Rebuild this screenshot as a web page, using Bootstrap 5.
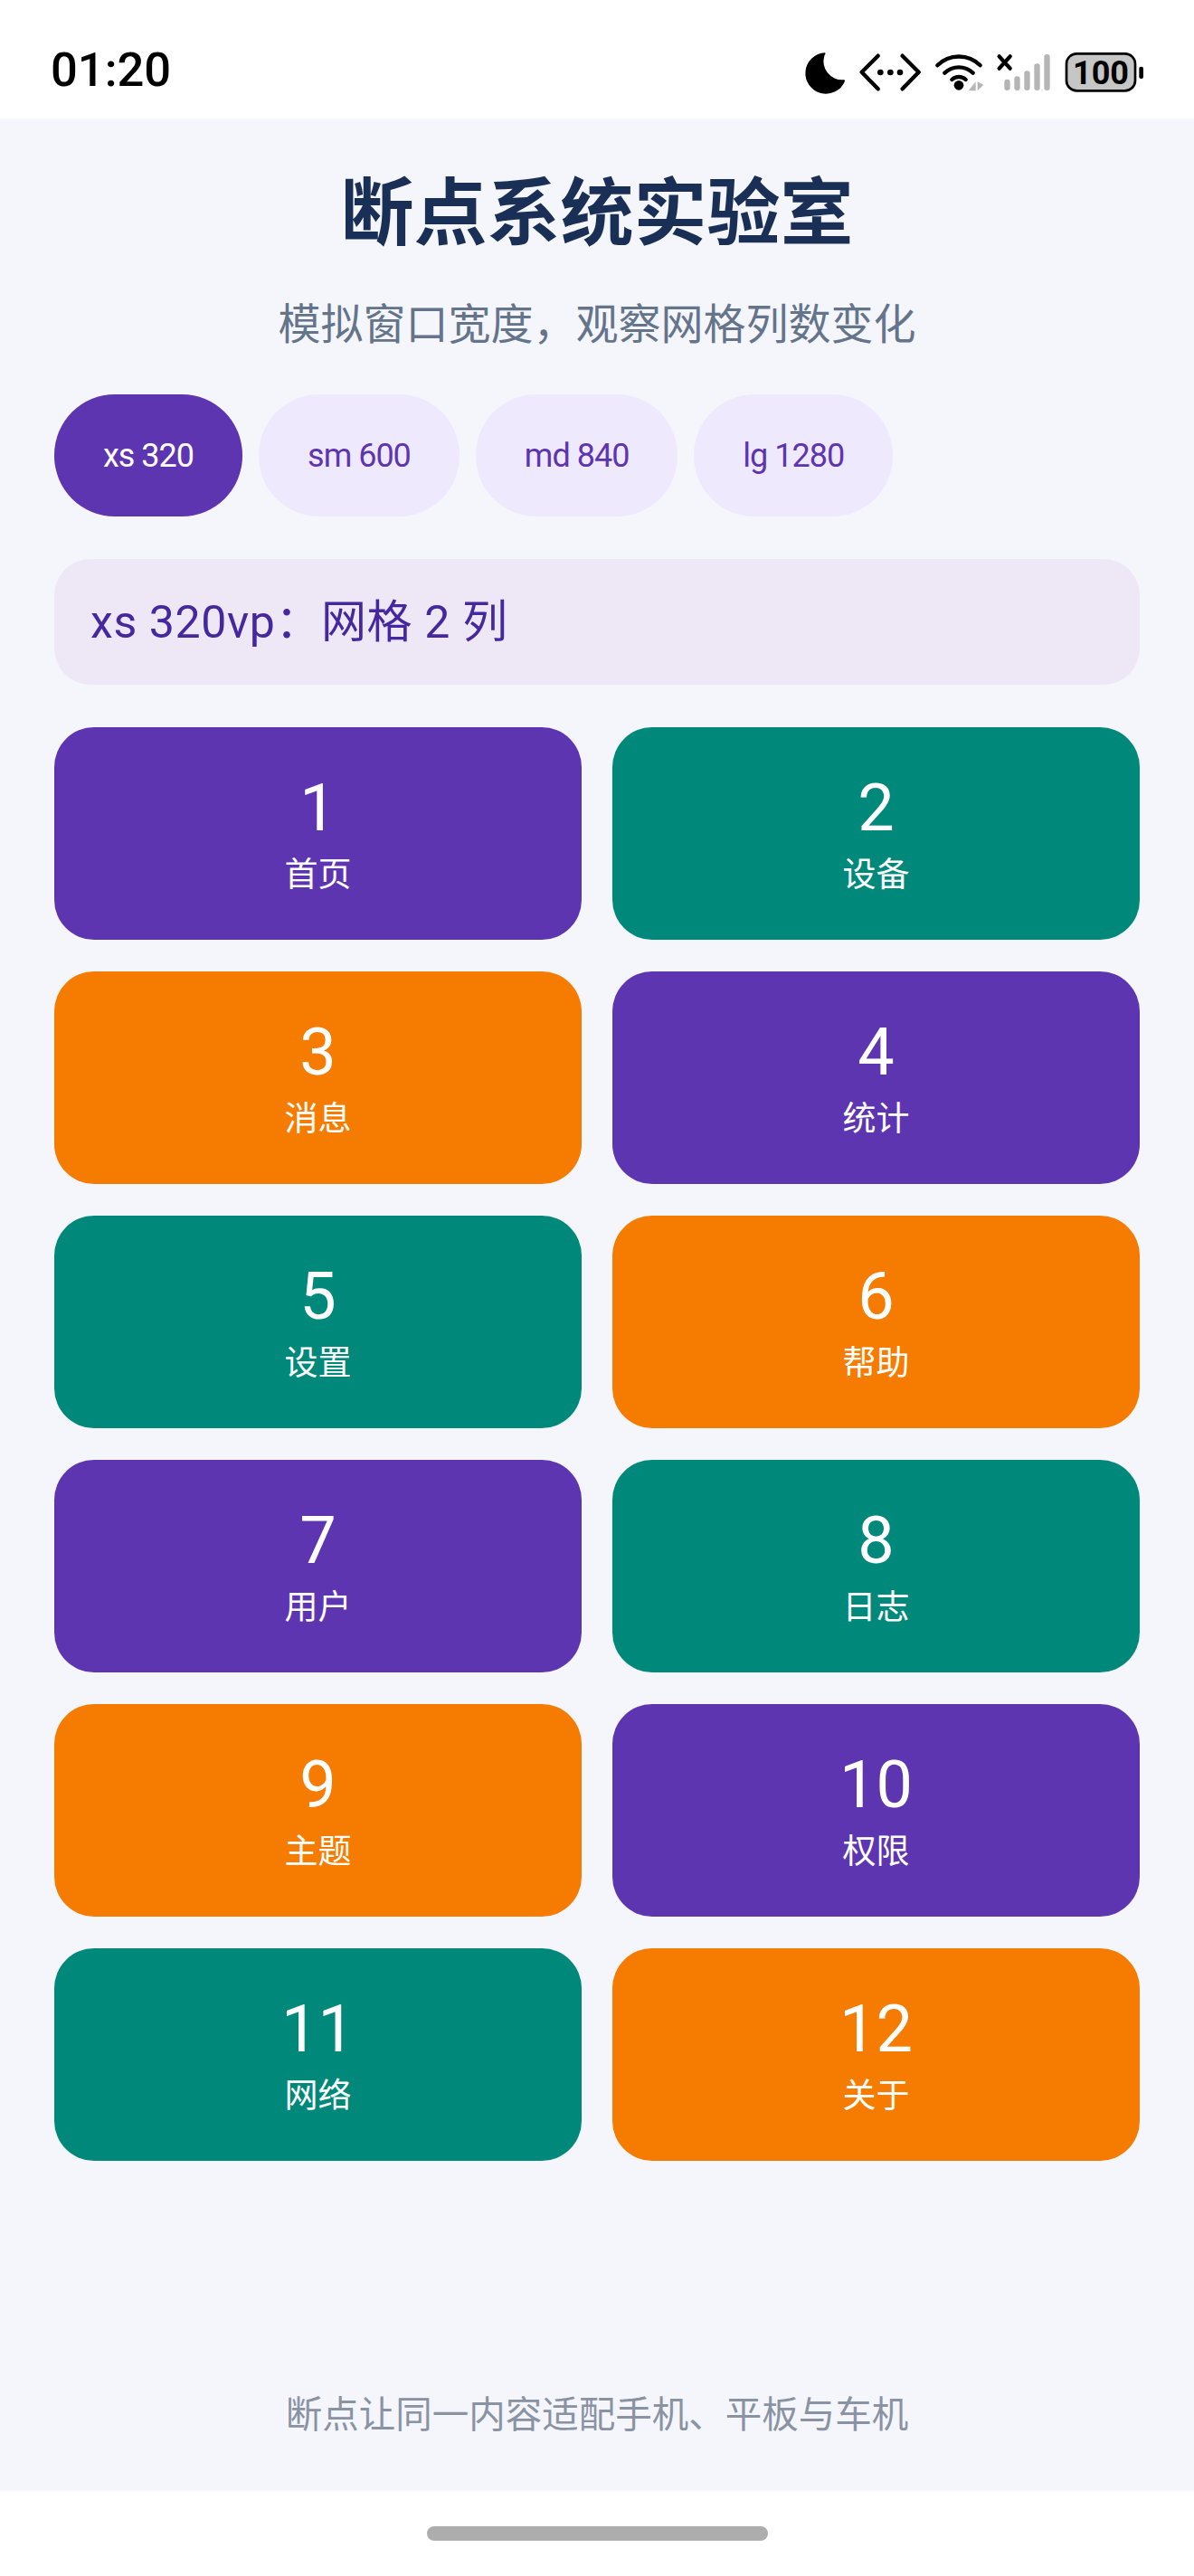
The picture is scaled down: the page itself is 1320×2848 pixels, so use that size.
<!DOCTYPE html>
<html lang="zh">
<head>
<meta charset="utf-8">
<title>断点系统实验室</title>
<link href="https://cdn.jsdelivr.net/npm/bootstrap@5.3.0/dist/css/bootstrap.min.css" rel="stylesheet">
<style>
html,body{height:100%}
body{width:1320px;height:2848px;margin:0;background:#fff;font-family:Roboto,"Noto Sans CJK SC",sans-serif;overflow:hidden}
.sbar{height:131px;padding:20px 40px 0 56px}
.clock{font-size:52.5px;color:#000;line-height:1;font-weight:500;margin-top:4px}
.sicons{width:420px;height:90px}
.batt{font-family:Roboto,sans-serif;font-weight:700;font-size:108px}
.lab{background:#f5f6fc;padding:0 60px}
.ttl{font-size:81px;font-weight:700;color:#1a2f55;line-height:106px;margin:53px 0 0}
.sub{font-size:47px;color:#64748b;line-height:64px;margin:37px 0 0}
.chips{gap:18px;margin-top:45px}
.chip{height:135px;padding:0 54px;border-radius:67px;background:#efe9fd;color:#5e35b1;font-size:36px;letter-spacing:-1px;border:0}
.chip.on{background:#5e35b1;color:#fff}
.state{height:139px;margin-top:47px;padding:2px 40px 0;border-radius:40px;background:#ede7f6;color:#4527a0;font-size:50px;letter-spacing:.6px}
.tiles{--bs-gutter-x:34px;--bs-gutter-y:35px;margin-top:12px}
.tile{height:235px;border-radius:44px;color:#fff}
.t-p{background:#5e35b1}.t-g{background:#00897b}.t-o{background:#f57c00}
.num{font-size:72px;line-height:84px}
.nm{font-size:37px;line-height:48px;margin-top:8px}
.foot{font-size:40.5px;color:#8a93a3;line-height:56px;padding-bottom:56px}
.hbar{height:94px}
.hpill{width:377px;height:16px;border-radius:8px;background:#adadad}
</style>
</head>
<body class="d-flex flex-column">
<header class="sbar d-flex align-items-center justify-content-between">
  <span class="clock">01:20</span>
  <svg class="sicons" viewBox="0 0 1260 270" aria-hidden="true">
    <path d="M156 82A68 68 0 1 0 222 176Q224 170 216 172A62 62 0 0 1 154 92Q160 84 156 82Z" fill="#000"/>
    <g fill="none" stroke="#000" stroke-width="13" stroke-linecap="round" stroke-linejoin="round">
      <path d="M332 92 278 146 332 202M413 92 467 146 413 202"/>
      <path d="M529 124A100 100 0 0 1 671 124M553 149A68 68 0 0 1 647 149M577 171A34 34 0 0 1 623 171"/>
      <path d="M734 94 770 134M770 94 734 134"/>
    </g>
    <circle cx="340" cy="147" r="10"/><circle cx="373" cy="147" r="10"/><circle cx="405" cy="147" r="10"/>
    <circle cx="600" cy="190" r="16"/>
    <path d="M656 178V208H632ZM662 178V208L682 188Z" fill="#b5b5b5"/>
    <g fill="#b5b5b5">
      <rect x="751" y="170" width="19" height="37" rx="9"/><rect x="784" y="160" width="19" height="47" rx="9"/><rect x="817" y="142" width="19" height="65" rx="9"/><rect x="850" y="118" width="19" height="89" rx="9"/><rect x="883" y="87" width="19" height="120" rx="9"/>
    </g>
    <rect x="957" y="85" width="228" height="123" rx="34" fill="#c6c6c6" stroke="#000" stroke-width="8"/>
    <text class="batt" x="1071" y="185" text-anchor="middle" fill="#000">100</text>
    <rect x="1198" y="128" width="14" height="40" rx="6"/>
  </svg>
</header>
<main class="lab flex-grow-1 d-flex flex-column">
  <h1 class="ttl text-center">断点系统实验室</h1>
  <p class="sub text-center mb-0">模拟窗口宽度，观察网格列数变化</p>
  <div class="chips d-flex">
    <button type="button" class="chip on d-flex align-items-center">xs 320</button>
    <button type="button" class="chip d-flex align-items-center">sm 600</button>
    <button type="button" class="chip d-flex align-items-center">md 840</button>
    <button type="button" class="chip d-flex align-items-center">lg 1280</button>
  </div>
  <div class="state d-flex align-items-center">xs 320vp：网格 2 列</div>
  <div class="tiles row">
    <div class="col-6"><div class="tile t-p d-flex flex-column align-items-center justify-content-center"><div class="num">1</div><div class="nm">首页</div></div></div>
    <div class="col-6"><div class="tile t-g d-flex flex-column align-items-center justify-content-center"><div class="num">2</div><div class="nm">设备</div></div></div>
    <div class="col-6"><div class="tile t-o d-flex flex-column align-items-center justify-content-center"><div class="num">3</div><div class="nm">消息</div></div></div>
    <div class="col-6"><div class="tile t-p d-flex flex-column align-items-center justify-content-center"><div class="num">4</div><div class="nm">统计</div></div></div>
    <div class="col-6"><div class="tile t-g d-flex flex-column align-items-center justify-content-center"><div class="num">5</div><div class="nm">设置</div></div></div>
    <div class="col-6"><div class="tile t-o d-flex flex-column align-items-center justify-content-center"><div class="num">6</div><div class="nm">帮助</div></div></div>
    <div class="col-6"><div class="tile t-p d-flex flex-column align-items-center justify-content-center"><div class="num">7</div><div class="nm">用户</div></div></div>
    <div class="col-6"><div class="tile t-g d-flex flex-column align-items-center justify-content-center"><div class="num">8</div><div class="nm">日志</div></div></div>
    <div class="col-6"><div class="tile t-o d-flex flex-column align-items-center justify-content-center"><div class="num">9</div><div class="nm">主题</div></div></div>
    <div class="col-6"><div class="tile t-p d-flex flex-column align-items-center justify-content-center"><div class="num">10</div><div class="nm">权限</div></div></div>
    <div class="col-6"><div class="tile t-g d-flex flex-column align-items-center justify-content-center"><div class="num">11</div><div class="nm">网络</div></div></div>
    <div class="col-6"><div class="tile t-o d-flex flex-column align-items-center justify-content-center"><div class="num">12</div><div class="nm">关于</div></div></div>
  </div>
  <div class="foot text-center mt-auto">断点让同一内容适配手机、平板与车机</div>
</main>
<footer class="hbar d-flex align-items-center justify-content-center"><div class="hpill"></div></footer>
</body>
</html>
